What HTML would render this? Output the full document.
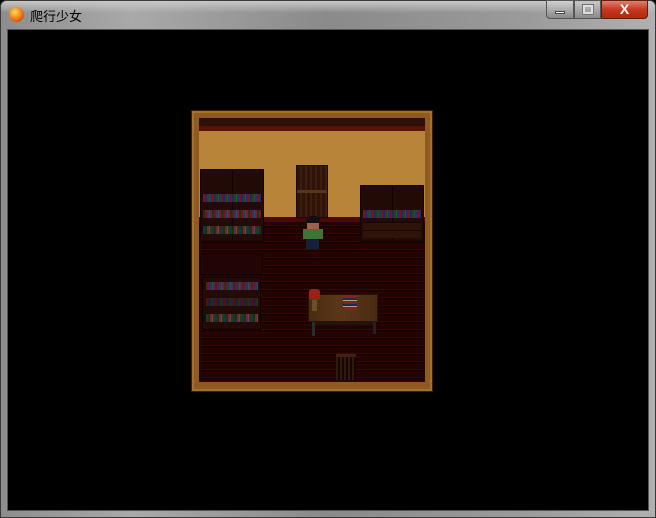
<!DOCTYPE html><html><head><meta charset="utf-8"><style>
*{margin:0;padding:0;box-sizing:border-box}
body{width:656px;height:518px;overflow:hidden;background:#000;font-family:"Liberation Sans","Noto Sans CJK SC",sans-serif;position:relative}
.a{position:absolute}
.frame{left:0;top:0;width:656px;height:518px;background:linear-gradient(90deg,#8d8d8d 0%,#a9a9a9 20%,#8a8a8a 50%,#9a9a9a 80%,#b0b0b0 100%);border:1px solid #3a3a3a;border-radius:6px 6px 0 0}
.client{left:7px;top:29px;width:642px;height:482px;background:#000;border:1px solid #555}
.wood{background:repeating-linear-gradient(0deg,#2a0404 0 2px,#1c0303 2px 4px,#3a0606 4px 5px,#200404 5px 8px)}
.shelf{background:#220a06;border:1px solid #100402}
.books{height:8px;opacity:.65;background:repeating-linear-gradient(90deg,#a02020 0 2px,#3030a0 2px 4px,#206030 4px 6px,#208040 6px 7px,#3040a0 7px 9px)}
</style></head><body>
<div class="a frame"></div>
<div class="a" style="left:1px;top:1px;width:654px;height:12px;background:linear-gradient(#c8c8c8,rgba(160,160,160,0));border-radius:6px 6px 0 0"></div>
<div class="a" style="left:9px;top:7px;width:15px;height:15px;border-radius:50%;background:radial-gradient(circle at 40% 35%,#ffe060,#f07010 55%,#b03000)"></div>
<div class="a" style="left:30px;top:6px;font-size:13px;color:#000">爬行少女</div>
<div class="a" style="left:546px;top:0;width:28px;height:19px;background:linear-gradient(#d0d0d0,#8a8a8a);border:1px solid #555;border-radius:0 0 0 4px"><div class="a" style="left:8px;top:10px;width:10px;height:3px;background:#fff;border:1px solid #444"></div></div>
<div class="a" style="left:574px;top:0;width:27px;height:19px;background:linear-gradient(#c8c8c8,#8a8a8a);border:1px solid #555"><div class="a" style="left:8px;top:4px;width:10px;height:9px;border:2px solid #ddd;outline:1px solid #777"></div></div>
<div class="a" style="left:601px;top:0;width:47px;height:19px;background:linear-gradient(#e08070,#c83820 50%,#b02810);border:1px solid #602010;border-radius:0 0 4px 0;color:#fff;font-weight:bold;font-size:14px;text-align:center;line-height:17px">X</div>
<div class="a client"></div>
<!-- room -->
<div class="a" style="left:191px;top:110px;width:242px;height:282px;background:#8e5a22;border:1px solid #3a2008;box-shadow:inset 0 0 0 2px #a4702c"></div>
<div class="a" style="left:199px;top:118px;width:226px;height:264px;background:#1a0404;border:1px solid #4a2a0a"></div>
<div class="a" style="left:199px;top:118px;width:226px;height:8px;background:#2e1006"></div>
<div class="a" style="left:199px;top:126px;width:226px;height:5px;background:#5a1208"></div>
<div class="a" style="left:199px;top:131px;width:226px;height:86px;background:#b8843a"></div>
<div class="a" style="left:199px;top:217px;width:226px;height:5px;background:#4a0a04"></div>
<div class="a wood" style="left:199px;top:222px;width:226px;height:160px"></div>
<!-- door -->
<div class="a" style="left:296px;top:165px;width:32px;height:53px;background:repeating-linear-gradient(90deg,#2e1408 0 3px,#3c1e10 3px 5px);border:1px solid #1a0804"></div>
<div class="a" style="left:297px;top:190px;width:30px;height:3px;background:#5a3418"></div>
<!-- left bookshelf -->
<div class="a shelf" style="left:200px;top:169px;width:64px;height:73px"></div>
<div class="a" style="left:232px;top:169px;width:1px;height:73px;background:#100402"></div>
<div class="a books" style="left:203px;top:194px;width:58px"></div>
<div class="a books" style="left:203px;top:210px;width:58px;filter:hue-rotate(90deg)"></div>
<div class="a books" style="left:203px;top:226px;width:58px;filter:hue-rotate(200deg)"></div>
<!-- right bookshelf -->
<div class="a shelf" style="left:360px;top:185px;width:64px;height:57px"></div>
<div class="a" style="left:392px;top:185px;width:1px;height:57px;background:#100402"></div>
<div class="a books" style="left:363px;top:210px;width:58px"></div>
<div class="a" style="left:363px;top:222px;width:58px;height:16px;background:repeating-linear-gradient(0deg,#2e1408 0 7px,#140604 7px 8px)"></div>
<!-- left lower shelf -->
<div class="a shelf" style="left:200px;top:253px;width:63px;height:22px;background:#220404"></div>
<div class="a shelf" style="left:202px;top:277px;width:59px;height:53px"></div>
<div class="a books" style="left:206px;top:282px;width:52px;filter:hue-rotate(60deg)"></div>
<div class="a books" style="left:206px;top:298px;width:52px;opacity:.35"></div>
<div class="a books" style="left:206px;top:314px;width:52px;filter:hue-rotate(200deg)"></div>
<!-- character -->
<div class="a" style="left:306px;top:216px;width:14px;height:10px;background:#111;border-radius:5px 5px 2px 2px"></div>
<div class="a" style="left:307px;top:223px;width:12px;height:6px;background:#a06050"></div>
<div class="a" style="left:303px;top:229px;width:20px;height:10px;background:#3e7436"></div>
<div class="a" style="left:306px;top:239px;width:13px;height:10px;background:#16203a"></div>
<!-- table -->
<div class="a" style="left:308px;top:294px;width:70px;height:28px;background:linear-gradient(90deg,#4a2a12,#5c3818,#4a2a12);border:1px solid #2a1408"></div>
<div class="a" style="left:312px;top:322px;width:64px;height:3px;background:#20140c"></div>
<div class="a" style="left:312px;top:322px;width:3px;height:14px;background:#223030"></div>
<div class="a" style="left:373px;top:322px;width:3px;height:12px;background:#222"></div>
<div class="a" style="left:309px;top:289px;width:11px;height:11px;background:#9a2214;border-radius:3px"></div>
<div class="a" style="left:312px;top:300px;width:5px;height:11px;background:#6a5228"></div>
<div class="a" style="left:343px;top:296px;width:14px;height:14px;background:repeating-linear-gradient(0deg,#8a2018 0 3px,#b0a078 3px 4px,#1c2a50 4px 6px)"></div>
<!-- chair -->
<div class="a" style="left:336px;top:354px;width:20px;height:26px;background:repeating-linear-gradient(90deg,#301a0a 0 2px,#140604 2px 4px);border-top:3px solid #3e220e"></div>
</body></html>
